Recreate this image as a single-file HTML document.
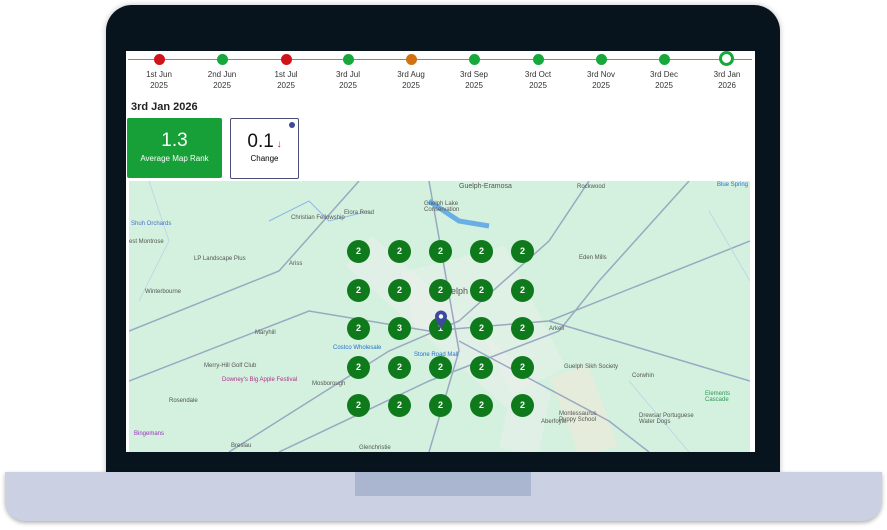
<!DOCTYPE html><html><head><style>
body{margin:0;width:887px;height:530px;background:#fff;position:relative;overflow:hidden;font-family:"Liberation Sans",sans-serif}
.abs{position:absolute}
.lbl{position:absolute;font-size:8px;color:#333;text-align:center;width:50px;line-height:11px}
.dot{position:absolute;width:11px;height:11px;border-radius:50%;top:54px}
.pin{position:absolute;width:23px;height:23px;border-radius:50%;background:#0f7a1c;color:#fff;font-size:9px;font-weight:bold;text-align:center;line-height:23px}
.m{position:absolute;font-size:6px;color:#555}
</style></head><body>
<div class="abs" style="left:106px;top:5px;width:674px;height:475px;background:#07141d;border-radius:26px 26px 0 0;box-shadow:0 0 6px rgba(0,0,0,.25)"></div>
<div class="abs" style="left:5px;top:472px;width:877px;height:49px;background:#cbd0e2;border-radius:0 0 20px 20px;box-shadow:0 2px 4px rgba(0,0,0,.3)"></div>
<div class="abs" style="left:355px;top:472px;width:176px;height:24px;background:#aab5d0"></div>
<div class="abs" style="left:126px;top:51px;width:629px;height:401px;background:#fff"></div>
<div class="abs" style="left:128px;top:59px;width:624px;height:1px;background:#888"></div>
<div class="dot" style="left:154px;background:#d0141a"></div>
<div class="dot" style="left:217px;background:#16a83a"></div>
<div class="dot" style="left:281px;background:#d0141a"></div>
<div class="dot" style="left:343px;background:#16a83a"></div>
<div class="dot" style="left:406px;background:#d2720f"></div>
<div class="dot" style="left:469px;background:#16a83a"></div>
<div class="dot" style="left:533px;background:#16a83a"></div>
<div class="dot" style="left:596px;background:#16a83a"></div>
<div class="dot" style="left:659px;background:#16a83a"></div>
<div class="dot" style="left:719px;top:51px;width:9px;height:9px;border:3px solid #16a83a;background:#fff"></div>
<div class="lbl" style="left:134px;top:69px">1st Jun<br>2025</div>
<div class="lbl" style="left:197px;top:69px">2nd Jun<br>2025</div>
<div class="lbl" style="left:261px;top:69px">1st Jul<br>2025</div>
<div class="lbl" style="left:323px;top:69px">3rd Jul<br>2025</div>
<div class="lbl" style="left:386px;top:69px">3rd Aug<br>2025</div>
<div class="lbl" style="left:449px;top:69px">3rd Sep<br>2025</div>
<div class="lbl" style="left:513px;top:69px">3rd Oct<br>2025</div>
<div class="lbl" style="left:576px;top:69px">3rd Nov<br>2025</div>
<div class="lbl" style="left:639px;top:69px">3rd Dec<br>2025</div>
<div class="lbl" style="left:702px;top:69px">3rd Jan<br>2026</div>
<div class="abs" style="left:131px;top:101px;font-size:11px;font-weight:bold;color:#222">3rd Jan 2026</div>
<div class="abs" style="left:127px;top:118px;width:95px;height:60px;background:#16a037;border-radius:2px;color:#fff;text-align:center">
<div style="font-size:19px;margin-top:12px">1.3</div><div style="font-size:8px;margin-top:2px">Average Map Rank</div></div>
<div class="abs" style="left:230px;top:118px;width:67px;height:59px;border:1px solid #4a4f7a;border-radius:2px;text-align:center">
<div style="font-size:19px;margin-top:12px;color:#111">0.1<span style="color:#d0141a;font-size:10px;font-weight:bold"> ↓</span></div><div style="font-size:8px;margin-top:1px">Change</div>
<div class="abs" style="left:58px;top:3px;width:6px;height:6px;border-radius:50%;background:#3f4a9a"></div></div>
<div class="abs" style="left:129px;top:181px;width:621px;height:271px;background:#d3f1de;overflow:hidden">
<svg width="621" height="271" style="position:absolute;left:0;top:0">
<path d="M230 70 L400 220 L390 271" stroke="#eef0ee" stroke-width="40" fill="none" opacity=".5"/>
<path d="M280 120 L360 100 L410 200" stroke="#eef0ee" stroke-width="60" fill="none" opacity=".45"/>
<path d="M440 190 L470 271" stroke="#f2ead8" stroke-width="40" fill="none" opacity=".6"/>
<g stroke="#9aa8c2" stroke-width="1.5" fill="none">
<path d="M0 200 L180 130 L300 150 L420 140 L621 60"/>
<path d="M100 271 L260 170 L330 140 L420 60 L460 0"/>
<path d="M300 271 L330 170 L300 0"/>
<path d="M560 0 L470 100 L430 150 L300 200 L150 271"/>
<path d="M330 160 L480 240 L520 271"/>
<path d="M0 150 L150 90 L230 0"/>
<path d="M420 140 L621 200"/>
</g>
<g stroke="#b9d4e8" stroke-width=".8" fill="none">
<path d="M20 0 L40 60 L10 120"/><path d="M500 200 L560 271"/><path d="M580 30 L621 100"/>
</g>
<path d="M140 40 L180 20 L200 40 L240 30" stroke="#8fb8e6" stroke-width="1" fill="none"/>
<path d="M300 20 L330 40 L360 45" stroke="#6aaee6" stroke-width="5" fill="none"/>
</svg>
<div class="m" style="left:330px;top:2px;font-size:7px">Guelph-Eramosa</div>
<div class="m" style="left:448px;top:3px">Rockwood</div>
<div class="m" style="left:295px;top:20px">Guelph Lake<br>Conservation</div>
<div class="m" style="left:215px;top:29px">Elora Road</div>
<div class="m" style="left:162px;top:34px">Christian Fellowship</div>
<div class="m" style="left:2px;top:40px;color:#4a6fd0">Shuh Orchards</div>
<div class="m" style="left:0;top:58px">est Montrose</div>
<div class="m" style="left:450px;top:74px">Eden Mills</div>
<div class="m" style="left:65px;top:75px">LP Landscape Plus</div>
<div class="m" style="left:160px;top:80px">Ariss</div>
<div class="m" style="left:16px;top:108px">Winterbourne</div>
<div class="m" style="left:310px;top:105px;font-size:9px">Guelph</div>
<div class="m" style="left:420px;top:145px">Arkell</div>
<div class="m" style="left:126px;top:149px">Maryhill</div>
<div class="m" style="left:204px;top:164px;color:#2a6fd0">Costco Wholesale</div>
<div class="m" style="left:285px;top:171px;color:#2a6fd0">Stone Road Mall</div>
<div class="m" style="left:435px;top:183px">Guelph Sikh Society</div>
<div class="m" style="left:75px;top:182px">Merry-Hill Golf Club</div>
<div class="m" style="left:93px;top:196px;color:#b0308a">Downey's Big Apple Festival</div>
<div class="m" style="left:183px;top:200px">Mosborough</div>
<div class="m" style="left:503px;top:192px">Corwhin</div>
<div class="m" style="left:40px;top:217px">Rosendale</div>
<div class="m" style="left:576px;top:210px;color:#2a9a5a">Elements Cascade</div>
<div class="m" style="left:430px;top:230px">Montessaurus<br>Puppy School</div>
<div class="m" style="left:510px;top:232px">Drewsar Portuguese<br>Water Dogs</div>
<div class="m" style="left:5px;top:250px;color:#9a30c0">Bingemans</div>
<div class="m" style="left:102px;top:262px">Breslau</div>
<div class="m" style="left:230px;top:264px">Glenchristie</div>
<div class="m" style="left:412px;top:238px">Aberfoyle</div>
<div class="m" style="left:588px;top:1px;color:#2a6fd0">Blue Spring</div>
</div>
<div class="pin" style="left:347px;top:240px">2</div><div class="pin" style="left:388px;top:240px">2</div><div class="pin" style="left:429px;top:240px">2</div><div class="pin" style="left:470px;top:240px">2</div><div class="pin" style="left:511px;top:240px">2</div>
<div class="pin" style="left:347px;top:279px">2</div><div class="pin" style="left:388px;top:279px">2</div><div class="pin" style="left:429px;top:279px">2</div><div class="pin" style="left:470px;top:279px">2</div><div class="pin" style="left:511px;top:279px">2</div>
<div class="pin" style="left:347px;top:317px">2</div><div class="pin" style="left:388px;top:317px">3</div><div class="pin" style="left:429px;top:317px">1</div><div class="pin" style="left:470px;top:317px">2</div><div class="pin" style="left:511px;top:317px">2</div>
<div class="pin" style="left:347px;top:356px">2</div><div class="pin" style="left:388px;top:356px">2</div><div class="pin" style="left:429px;top:356px">2</div><div class="pin" style="left:470px;top:356px">2</div><div class="pin" style="left:511px;top:356px">2</div>
<div class="pin" style="left:347px;top:394px">2</div><div class="pin" style="left:388px;top:394px">2</div><div class="pin" style="left:429px;top:394px">2</div><div class="pin" style="left:470px;top:394px">2</div><div class="pin" style="left:511px;top:394px">2</div>
<svg class="abs" style="left:434px;top:310px" width="14" height="20"><path d="M7 19 C3 12 1 9 1 6.5 A6 6 0 0 1 13 6.5 C13 9 11 12 7 19Z" fill="#3e4aa0"/><circle cx="7" cy="6.5" r="2.2" fill="#fff"/></svg>
</body></html>
